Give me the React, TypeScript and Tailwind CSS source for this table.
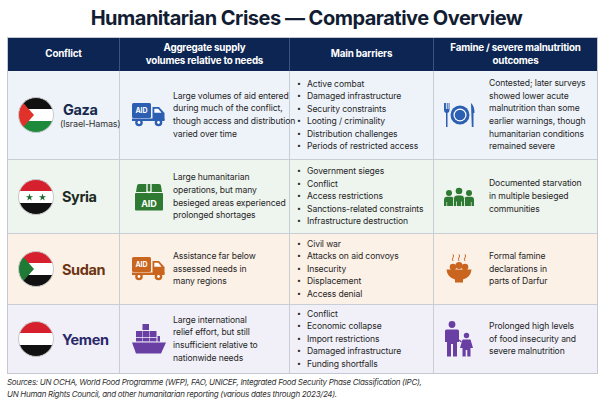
import React from "react";

const Flag = ({ id, kind }: { id: string; kind: "ps" | "sy" | "sd" | "ye" }) => (
  <svg width="36" height="36" viewBox="0 0 36 36" className="shrink-0">
    <defs>
      <clipPath id={id}>
        <circle cx="18" cy="18" r="17.5" />
      </clipPath>
    </defs>
    <g clipPath={`url(#${id})`}>
      {kind === "ps" ? (
        <>
          <rect x="0" y="0" width="36" height="12" fill="#111" />
          <rect x="0" y="12" width="36" height="12" fill="#fff" />
          <rect x="0" y="24" width="36" height="12" fill="#1d8a3c" />
          <path d="M0 0 L16 18 L0 36 Z" fill="#e0312b" />
        </>
      ) : (
        <>
          <rect x="0" y="0" width="36" height="12" fill="#d6202e" />
          <rect x="0" y="12" width="36" height="12" fill="#fff" />
          <rect x="0" y="24" width="36" height="12" fill="#111" />
          {kind === "sd" && <path d="M0 0 L16 18 L0 36 Z" fill="#1f7a35" />}
          {kind === "sy" && (
            <>
              <path d="M11.5 14.6 L12.4 17.2 L15.1 17.2 L12.9 18.8 L13.7 21.4 L11.5 19.8 L9.3 21.4 L10.1 18.8 L7.9 17.2 L10.6 17.2 Z" fill="#1f6b33" />
              <path d="M24.5 14.6 L25.4 17.2 L28.1 17.2 L25.9 18.8 L26.7 21.4 L24.5 19.8 L22.3 21.4 L23.1 18.8 L20.9 17.2 L23.6 17.2 Z" fill="#1f6b33" />
            </>
          )}
        </>
      )}
    </g>
    <circle cx="18" cy="18" r="17.5" fill="none" stroke="#c9c9c9" strokeWidth="1" />
  </svg>
);

const Truck = ({ color }: { color: string }) => (
  <svg width="34" height="24" viewBox="0 0 34 24" className="shrink-0">
    <rect x="0" y="0" width="19" height="15" rx="1.5" fill={color} />
    <text x="9.5" y="10.3" textAnchor="middle" fontSize="7" fontWeight="700" fill="#fff" fontFamily="Inter, sans-serif">AID</text>
    <path d="M20.5 4 H27 L32.5 10 V17 H20.5 Z" fill={color} />
    <path d="M22.3 5.8 H26.2 L29.6 9.8 H22.3 Z" fill="#fff" />
    <rect x="0" y="15.5" width="32.5" height="2.5" fill={color} />
    <circle cx="7" cy="19.5" r="3.8" fill={color} />
    <circle cx="7" cy="19.5" r="1.4" fill="#fff" />
    <circle cx="26.5" cy="19.5" r="3.8" fill={color} />
    <circle cx="26.5" cy="19.5" r="1.4" fill="#fff" />
  </svg>
);

const AidBox = ({ color }: { color: string }) => (
  <svg width="30" height="28" viewBox="0 0 30 28" className="shrink-0">
    <path d="M3 3 Q3 1 5 1 H25 Q27 1 27 3 L28 9 H2 Z" fill={color} />
    <rect x="1" y="10" width="28" height="17.5" rx="1" fill={color} />
    <path d="M13 1 V8.5 Q15 10.5 17 8.5 V1" fill="none" stroke="#fff" strokeWidth="1.3" />
    <text x="15" y="23.5" textAnchor="middle" fontSize="9" fontWeight="700" fill="#fff" fontFamily="Inter, sans-serif">AID</text>
  </svg>
);

const Ship = ({ color }: { color: string }) => (
  <svg width="34" height="30" viewBox="0 0 34 30" className="shrink-0">
    <rect x="10.5" y="0" width="6.5" height="6" fill={color} />
    <rect x="4" y="7" width="6.5" height="6" fill={color} />
    <rect x="11" y="7" width="6.5" height="6" fill={color} />
    <rect x="18" y="7" width="6.5" height="6" fill={color} />
    <rect x="4" y="13.8" width="6.5" height="3.6" fill={color} />
    <rect x="11" y="13.8" width="6.5" height="3.6" fill={color} />
    <rect x="18" y="13.8" width="6.5" height="3.6" fill={color} />
    <path d="M25.5 12 H28 V17.5 H25.5 Z" fill={color} />
    <path d="M0 18.5 H34 L29 29.5 H4 Z" fill={color} />
  </svg>
);

const Plate = ({ color }: { color: string }) => (
  <svg width="32" height="26" viewBox="0 0 32 26" className="shrink-0">
    <path d="M1 1 V8 Q1 10.5 3 11 V25 H4.5 V11 Q6.5 10.5 6.5 8 V1 H5.6 V7 H4.7 V1 H3.8 V7 H2.9 V1 Z" fill={color} />
    <circle cx="17" cy="13" r="9.5" fill={color} />
    <circle cx="17" cy="13" r="6.5" fill="#fff" />
    <circle cx="17" cy="13" r="5.3" fill={color} />
    <path d="M28 1 Q31.5 4 31.5 11 H30.5 V25 H28.8 Z" fill={color} />
  </svg>
);

const People = ({ color }: { color: string }) => (
  <svg width="30" height="20" viewBox="0 0 30 20" className="shrink-0">
    <circle cx="5" cy="6" r="3" fill={color} />
    <circle cx="25" cy="6" r="3" fill={color} />
    <circle cx="15" cy="4" r="3.3" fill={color} />
    <path d="M0 19 V13 Q0 9.8 3 9.8 H7 Q10 9.8 10 13 V19 Z" fill={color} />
    <path d="M20 19 V13 Q20 9.8 23 9.8 H27 Q30 9.8 30 13 V19 Z" fill={color} />
    <path d="M9.5 19.5 V11.5 Q9.5 8 13 8 H17 Q20.5 8 20.5 11.5 V19.5 Z" fill={color} stroke="#fff" strokeWidth="0.8" />
    <path d="M12.5 19.5 V14.5 M17.5 19.5 V14.5" stroke="#fff" strokeWidth="0.7" />
    <path d="M2.7 19 V15 M27.3 19 V15" stroke="#fff" strokeWidth="0.6" />
  </svg>
);

const Bowl = ({ color }: { color: string }) => (
  <svg width="26" height="30" viewBox="0 0 26 30" className="shrink-0">
    <path d="M7 7 Q5.8 5.2 7 3.6 Q8.2 2 7 0.4" fill="none" stroke={color} strokeWidth="1" />
    <path d="M13 7 Q11.8 5.2 13 3.6 Q14.2 2 13 0.4" fill="none" stroke={color} strokeWidth="1" />
    <path d="M19 7 Q17.8 5.2 19 3.6 Q20.2 2 19 0.4" fill="none" stroke={color} strokeWidth="1" />
    <circle cx="7" cy="13" r="3.3" fill={color} />
    <circle cx="13" cy="11.5" r="3.5" fill={color} />
    <circle cx="19" cy="13" r="3.3" fill={color} />
    <path d="M0.5 15.5 H25.5 Q25 23 17 25.5 V28.5 H9 V25.5 Q1 23 0.5 15.5 Z" fill={color} />
  </svg>
);

const Family = ({ color }: { color: string }) => (
  <svg width="30" height="36" viewBox="0 0 30 36" className="shrink-0">
    <circle cx="8" cy="3.5" r="3.4" fill={color} />
    <path d="M2.5 8.5 H13.5 Q15 8.5 15 10 V21 H13 V35.5 H9 V23 H7 V35.5 H3 V21 H1 V10 Q1 8.5 2.5 8.5 Z" fill={color} />
    <circle cx="22.5" cy="14.5" r="2.7" fill={color} />
    <path d="M18.5 18.5 H26.5 L29 27 H26.5 V35.5 H23.3 V29 H21.7 V35.5 H18.5 V27 H16 Z" fill={color} />
    <path d="M15 19 L17.5 21" stroke={color} strokeWidth="1.4" />
  </svg>
);

type Row = {
  bg: string;
  h: string;
  flag: "ps" | "sy" | "sd" | "ye";
  name: string;
  nameCls: string;
  sub?: string;
  supplyIcon: React.ReactNode;
  supply: string[];
  barriers: string[];
  outIcon: React.ReactNode;
  outcome: string[];
};

const rows: Row[] = [
  {
    bg: "bg-[#eef3fa]",
    h: "h-[88px]",
    flag: "ps",
    name: "Gaza",
    nameCls: "text-[#172a4c]",
    sub: "(Israel-Hamas)",
    supplyIcon: <Truck color="#2c5fb2" />,
    supply: ["Large volumes of aid entered", "during much of the conflict,", "though access and distribution", "varied over time"],
    barriers: ["Active combat", "Damaged infrastructure", "Security constraints", "Looting / criminality", "Distribution challenges", "Periods of restricted access"],
    outIcon: <Plate color="#2c5fb2" />,
    outcome: ["Contested; later surveys", "showed lower acute", "malnutrition than some", "earlier warnings, though", "humanitarian conditions", "remained severe"],
  },
  {
    bg: "bg-[#eef4ee]",
    h: "h-[74px]",
    flag: "sy",
    name: "Syria",
    nameCls: "text-[#1c2a21]",
    supplyIcon: <AidBox color="#2f7a33" />,
    supply: ["Large humanitarian", "operations, but many", "besieged areas experienced", "prolonged shortages"],
    barriers: ["Government sieges", "Conflict", "Access restrictions", "Sanctions-related constraints", "Infrastructure destruction"],
    outIcon: <People color="#2f7a33" />,
    outcome: ["Documented starvation", "in multiple besieged", "communities"],
  },
  {
    bg: "bg-[#fcf1e6]",
    h: "h-[71px]",
    flag: "sd",
    name: "Sudan",
    nameCls: "text-[#6b3512]",
    supplyIcon: <Truck color="#c9651f" />,
    supply: ["Assistance far below", "assessed needs in", "many regions"],
    barriers: ["Civil war", "Attacks on aid convoys", "Insecurity", "Displacement", "Access denial"],
    outIcon: <Bowl color="#c9651f" />,
    outcome: ["Formal famine", "declarations in", "parts of Darfur"],
  },
  {
    bg: "bg-[#f1f0f8]",
    h: "h-[69px]",
    flag: "ye",
    name: "Yemen",
    nameCls: "text-[#28286a]",
    supplyIcon: <Ship color="#6a3fa3" />,
    supply: ["Large international", "relief effort, but still", "insufficient relative to", "nationwide needs"],
    barriers: ["Conflict", "Economic collapse", "Import restrictions", "Damaged infrastructure", "Funding shortfalls"],
    outIcon: <Family color="#6a3fa3" />,
    outcome: ["Prolonged high levels", "of food insecurity and", "severe malnutrition"],
  },
];

const cols = "grid grid-cols-[112px_170px_144px_163px]";

export default function App() {
  return (
    <div className="w-[605px] h-[403px] bg-white font-['Inter',sans-serif] text-[#2a2a2a] overflow-hidden">
      <h1 className="h-[37px] pt-[5px] pl-[8px] text-center text-[20px] leading-[26px] font-bold text-[#121d33] tracking-[-0.5px] whitespace-nowrap">
        Humanitarian Crises — Comparative Overview
      </h1>
      <div className="mx-[7px] w-[591px] border border-[#c3c8d2]">
        <div className={`${cols} h-[33px] bg-[#0c2552] text-white text-[9.8px] leading-[12.8px] font-bold text-center tracking-[-0.2px] whitespace-nowrap`}>
          <div className="flex items-center justify-center border-r border-[#3a5280]">Conflict</div>
          <div className="flex items-center justify-center border-r border-[#3a5280]">
            Aggregate supply<br />volumes relative to needs
          </div>
          <div className="flex items-center justify-center border-r border-[#3a5280]">Main barriers</div>
          <div className="flex items-center justify-center">
            Famine / severe malnutrition<br />outcomes
          </div>
        </div>
        {rows.map((r, i) => (
          <div key={r.name} className={`${cols} ${r.h} ${r.bg} ${i > 0 ? "border-t border-[#c9cdd5]" : ""} whitespace-nowrap`}>
            <div className="flex items-center gap-[8px] pl-[10px] border-r border-[#c9cdd5]">
              <Flag id={`f${i}`} kind={r.flag} />
              <div className="flex flex-col items-start">
                <span className={`text-[14.5px] leading-[17px] font-bold tracking-[-0.4px] ${r.sub ? "ml-[1px]" : ""} ${r.nameCls}`}>{r.name}</span>
                {r.sub && <span className="text-[9px] leading-[12px] tracking-[-0.2px] text-[#333] -ml-[2px]">{r.sub}</span>}
              </div>
            </div>
            <div className="flex items-center gap-[7px] pl-[12px] border-r border-[#c9cdd5]">
              <div className="w-[34px] shrink-0 flex justify-center">{r.supplyIcon}</div>
              <div className="text-[8.6px] leading-[12.7px] tracking-[-0.1px] text-[#262626]">
                {r.supply.map((t) => (
                  <div key={t}>{t}</div>
                ))}
              </div>
            </div>
            <div className="flex flex-col justify-center pl-[7px] border-r border-[#c9cdd5] text-[8.6px] leading-[12.5px] tracking-[-0.1px] text-[#262626]">
              {r.barriers.map((t) => (
                <div key={t} className="flex items-center">
                  <span className="w-[10px] text-[7px]">•</span>
                  <span>{t}</span>
                </div>
              ))}
            </div>
            <div className="flex items-center gap-[14px] pl-[9px]">
              <div className="w-[32px] shrink-0 flex justify-center">{r.outIcon}</div>
              <div className="text-[8.6px] leading-[12.7px] tracking-[-0.1px] text-[#262626]">
                {r.outcome.map((t) => (
                  <div key={t}>{t}</div>
                ))}
              </div>
            </div>
          </div>
        ))}
      </div>
      <div className="pl-[7px] pt-[3px] text-[8px] leading-[11.5px] italic tracking-[-0.3px] text-[#333] whitespace-nowrap">
        <div>Sources: UN OCHA, World Food Programme (WFP), FAO, UNICEF, Integrated Food Security Phase Classification (IPC),</div>
        <div>UN Human Rights Council, and other humanitarian reporting (various dates through 2023/24).</div>
      </div>
    </div>
  );
}
